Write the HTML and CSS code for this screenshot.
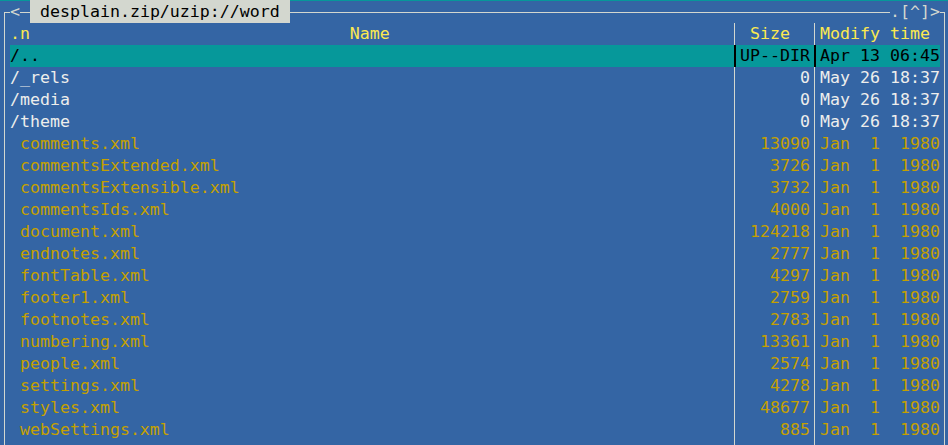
FILE: index.html
```html
<!DOCTYPE html>
<html>
<head>
<meta charset="utf-8">
<link rel="stylesheet" href="styles.css">
</head>
<body>
<div class="panel">
  <div class="titlerow">
    <span class="cl"></span>
    <span class="tx">&lt;</span>
    <span class="hl"></span>
    <span class="title"> desplain.zip/uzip://word </span>
    <span class="hl"></span>
    <span class="tx">.[^]&gt;</span>
    <span class="cr"></span>
  </div>
  <div class="row head">
    <span class="b"></span><span class="name">.n                                Name</span><span class="sep"></span><span class="size"> Size</span><span class="sep"></span><span class="time">Modify time</span><span class="b"></span>
  </div>
  <div class="row cur">
    <span class="b"></span><span class="name">/..</span><span class="sep"></span><span class="size">UP--DIR</span><span class="sep"></span><span class="time">Apr 13 06:45</span><span class="b"></span>
  </div>
  <div class="row dir">
    <span class="b"></span><span class="name">/_rels</span><span class="sep"></span><span class="size num">0</span><span class="sep"></span><span class="time">May 26 18:37</span><span class="b"></span>
  </div>
  <div class="row dir">
    <span class="b"></span><span class="name">/media</span><span class="sep"></span><span class="size num">0</span><span class="sep"></span><span class="time">May 26 18:37</span><span class="b"></span>
  </div>
  <div class="row dir">
    <span class="b"></span><span class="name">/theme</span><span class="sep"></span><span class="size num">0</span><span class="sep"></span><span class="time">May 26 18:37</span><span class="b"></span>
  </div>
  <div class="row file"><span class="b"></span><span class="name"> comments.xml</span><span class="sep"></span><span class="size num">13090</span><span class="sep"></span><span class="time">Jan  1  1980</span><span class="b"></span></div>
  <div class="row file"><span class="b"></span><span class="name"> commentsExtended.xml</span><span class="sep"></span><span class="size num">3726</span><span class="sep"></span><span class="time">Jan  1  1980</span><span class="b"></span></div>
  <div class="row file"><span class="b"></span><span class="name"> commentsExtensible.xml</span><span class="sep"></span><span class="size num">3732</span><span class="sep"></span><span class="time">Jan  1  1980</span><span class="b"></span></div>
  <div class="row file"><span class="b"></span><span class="name"> commentsIds.xml</span><span class="sep"></span><span class="size num">4000</span><span class="sep"></span><span class="time">Jan  1  1980</span><span class="b"></span></div>
  <div class="row file"><span class="b"></span><span class="name"> document.xml</span><span class="sep"></span><span class="size num">124218</span><span class="sep"></span><span class="time">Jan  1  1980</span><span class="b"></span></div>
  <div class="row file"><span class="b"></span><span class="name"> endnotes.xml</span><span class="sep"></span><span class="size num">2777</span><span class="sep"></span><span class="time">Jan  1  1980</span><span class="b"></span></div>
  <div class="row file"><span class="b"></span><span class="name"> fontTable.xml</span><span class="sep"></span><span class="size num">4297</span><span class="sep"></span><span class="time">Jan  1  1980</span><span class="b"></span></div>
  <div class="row file"><span class="b"></span><span class="name"> footer1.xml</span><span class="sep"></span><span class="size num">2759</span><span class="sep"></span><span class="time">Jan  1  1980</span><span class="b"></span></div>
  <div class="row file"><span class="b"></span><span class="name"> footnotes.xml</span><span class="sep"></span><span class="size num">2783</span><span class="sep"></span><span class="time">Jan  1  1980</span><span class="b"></span></div>
  <div class="row file"><span class="b"></span><span class="name"> numbering.xml</span><span class="sep"></span><span class="size num">13361</span><span class="sep"></span><span class="time">Jan  1  1980</span><span class="b"></span></div>
  <div class="row file"><span class="b"></span><span class="name"> people.xml</span><span class="sep"></span><span class="size num">2574</span><span class="sep"></span><span class="time">Jan  1  1980</span><span class="b"></span></div>
  <div class="row file"><span class="b"></span><span class="name"> settings.xml</span><span class="sep"></span><span class="size num">4278</span><span class="sep"></span><span class="time">Jan  1  1980</span><span class="b"></span></div>
  <div class="row file"><span class="b"></span><span class="name"> styles.xml</span><span class="sep"></span><span class="size num">48677</span><span class="sep"></span><span class="time">Jan  1  1980</span><span class="b"></span></div>
  <div class="row file"><span class="b"></span><span class="name"> webSettings.xml</span><span class="sep"></span><span class="size num">885</span><span class="sep"></span><span class="time">Jan  1  1980</span><span class="b"></span></div>
  <div class="row file"><span class="b"></span><span class="name"></span><span class="sep"></span><span class="size num"></span><span class="sep"></span><span class="time"></span><span class="b"></span></div>
</div>
</body>
</html>
```
FILE: styles.css
```css
html, body {
  margin: 0;
  padding: 0;
  background: #3465a4;
  overflow: hidden;
}

.panel {
  width: 950px;
  font-family: "DejaVu Sans Mono", monospace;
  font-size: 16.6px;
  color: #eeeeec;
}

.titlerow {
  display: grid;
  grid-template-columns: 10px 10px 10px 260px 600px 50px 10px;
  height: 23px;
  line-height: 23px;
  white-space: pre;
  background:
    linear-gradient(#06989a, #06989a) no-repeat 0 0 / 100% 1px,
    #3465a4;
}

.titlerow .cl {
  background:
    linear-gradient(#d3d7cf, #d3d7cf) no-repeat 4px 12px / 6px 1px,
    linear-gradient(#d3d7cf, #d3d7cf) no-repeat 4px 12px / 1px 11px;
}

.titlerow .cr {
  background:
    linear-gradient(#d3d7cf, #d3d7cf) no-repeat 0 12px / 5px 1px,
    linear-gradient(#d3d7cf, #d3d7cf) no-repeat 4px 12px / 1px 11px;
}

.titlerow .hl {
  background: linear-gradient(#d3d7cf, #d3d7cf) no-repeat 0 12px / 100% 1px;
}

.titlerow .tx {
  color: #d3d7cf;
}

.titlerow .title {
  background: #d3d7cf;
  color: #000000;
}

.row {
  display: grid;
  grid-template-columns: 10px 720px 10px 70px 10px 120px 10px;
  height: 22px;
  line-height: 22px;
  white-space: pre;
  overflow: hidden;
}

.row .b,
.row .sep {
  background: linear-gradient(#d3d7cf, #d3d7cf) no-repeat 4px 0 / 1px 100%;
}

.row .size {
  text-align: left;
}

.row .num {
  text-align: right;
}

.head {
  color: #fce94f;
}

.dir {
  color: #eeeeec;
}

.file {
  color: #c4a000;
}

.cur .name,
.cur .size,
.cur .time {
  background: #06989a;
  color: #000000;
}

.cur .sep {
  background:
    linear-gradient(#000000, #000000) no-repeat 4px 0 / 2px 100%,
    #06989a;
}
```
